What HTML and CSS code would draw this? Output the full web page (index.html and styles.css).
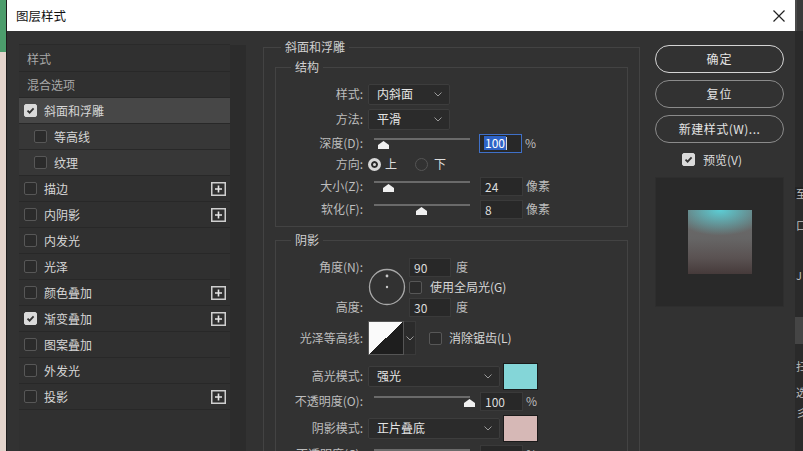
FILE: index.html
```html
<!DOCTYPE html>
<html lang="zh-CN">
<head>
<meta charset="utf-8">
<title>图层样式</title>
<link rel="stylesheet" href="styles.css">
</head>
<body>
<div class="screen">
  <div class="bg-left"><div class="green"></div><div class="pink"></div></div>
  <div class="dialog">
    <div class="titlebar">
      <span class="title">图层样式</span>
      <svg class="close" width="12" height="12" viewBox="0 0 12 12"><path d="M0.5 0.5 L11.5 11.5 M11.5 0.5 L0.5 11.5" stroke="#222" stroke-width="1.2" fill="none"/></svg>
    </div>
    <div class="body">
      <div class="sidebar">
        <ul class="list">
          <li class="item head">样式</li>
          <li class="item head">混合选项</li>
          <li class="item active"><span class="cb on"><svg width="11" height="11" viewBox="0 0 11 11"><path d="M2.5 5.6 L4.6 7.7 L8.6 3.4" stroke="#333" stroke-width="1.8" fill="none"/></svg></span><span class="itxt">斜面和浮雕</span></li>
          <li class="item sub"><span class="cb"></span><span class="itxt">等高线</span></li>
          <li class="item sub"><span class="cb"></span><span class="itxt">纹理</span></li>
          <li class="item"><span class="cb"></span><span class="itxt">描边</span><svg class="plus" width="15" height="14" viewBox="0 0 15 14"><rect x="0.75" y="0.75" width="13.5" height="12.5" fill="none" stroke="#cfcfcf" stroke-width="1.5"/><path d="M7.5 3.5 V10.5 M4 7 H11" stroke="#e6e6e6" stroke-width="1.6"/></svg></li>
          <li class="item"><span class="cb"></span><span class="itxt">内阴影</span><svg class="plus" width="15" height="14" viewBox="0 0 15 14"><rect x="0.75" y="0.75" width="13.5" height="12.5" fill="none" stroke="#cfcfcf" stroke-width="1.5"/><path d="M7.5 3.5 V10.5 M4 7 H11" stroke="#e6e6e6" stroke-width="1.6"/></svg></li>
          <li class="item"><span class="cb"></span><span class="itxt">内发光</span></li>
          <li class="item"><span class="cb"></span><span class="itxt">光泽</span></li>
          <li class="item"><span class="cb"></span><span class="itxt">颜色叠加</span><svg class="plus" width="15" height="14" viewBox="0 0 15 14"><rect x="0.75" y="0.75" width="13.5" height="12.5" fill="none" stroke="#cfcfcf" stroke-width="1.5"/><path d="M7.5 3.5 V10.5 M4 7 H11" stroke="#e6e6e6" stroke-width="1.6"/></svg></li>
          <li class="item"><span class="cb on"><svg width="11" height="11" viewBox="0 0 11 11"><path d="M2.5 5.6 L4.6 7.7 L8.6 3.4" stroke="#333" stroke-width="1.8" fill="none"/></svg></span><span class="itxt">渐变叠加</span><svg class="plus" width="15" height="14" viewBox="0 0 15 14"><rect x="0.75" y="0.75" width="13.5" height="12.5" fill="none" stroke="#cfcfcf" stroke-width="1.5"/><path d="M7.5 3.5 V10.5 M4 7 H11" stroke="#e6e6e6" stroke-width="1.6"/></svg></li>
          <li class="item"><span class="cb"></span><span class="itxt">图案叠加</span></li>
          <li class="item"><span class="cb"></span><span class="itxt">外发光</span></li>
          <li class="item"><span class="cb"></span><span class="itxt">投影</span><svg class="plus" width="15" height="14" viewBox="0 0 15 14"><rect x="0.75" y="0.75" width="13.5" height="12.5" fill="none" stroke="#cfcfcf" stroke-width="1.5"/><path d="M7.5 3.5 V10.5 M4 7 H11" stroke="#e6e6e6" stroke-width="1.6"/></svg></li>
        </ul>
        <div class="scroll"></div>
      </div>

      <div class="main">
        <fieldset class="group outer">
          <legend>斜面和浮雕</legend>
          <fieldset class="group inner struct">
            <legend>结构</legend>
            <div class="frow r1">
              <span class="lbl">样式:</span>
              <div class="select w82"><span>内斜面</span><svg class="chev" width="8" height="5" viewBox="0 0 8 5"><path d="M0.5 0.5 L4 4 L7.5 0.5" stroke="#9a9a9a" fill="none"/></svg></div>
            </div>
            <div class="frow r2">
              <span class="lbl">方法:</span>
              <div class="select w82"><span>平滑</span><svg class="chev" width="8" height="5" viewBox="0 0 8 5"><path d="M0.5 0.5 L4 4 L7.5 0.5" stroke="#9a9a9a" fill="none"/></svg></div>
            </div>
            <div class="frow r3">
              <span class="lbl">深度(D):</span>
              <div class="slider"><div class="track"></div><svg class="thumb" style="left:10px" width="11" height="8" viewBox="0 0 11 8"><path d="M5.5 0 L11 4 V8 H0 V4 Z" fill="#f0f0f0"/></svg></div>
              <div class="field focus"><span class="sel">100</span><span class="caret"></span></div>
              <span class="unit">%</span>
            </div>
            <div class="frow r4">
              <span class="lbl">方向:</span>
              <span class="radio on"></span><span class="rtxt first">上</span>
              <span class="radio"></span><span class="rtxt">下</span>
            </div>
            <div class="frow r5">
              <span class="lbl">大小(Z):</span>
              <div class="slider"><div class="track"></div><svg class="thumb" style="left:15px" width="11" height="8" viewBox="0 0 11 8"><path d="M5.5 0 L11 4 V8 H0 V4 Z" fill="#f0f0f0"/></svg></div>
              <div class="field">24</div>
              <span class="unit">像素</span>
            </div>
            <div class="frow r6">
              <span class="lbl">软化(F):</span>
              <div class="slider"><div class="track"></div><svg class="thumb" style="left:48px" width="11" height="8" viewBox="0 0 11 8"><path d="M5.5 0 L11 4 V8 H0 V4 Z" fill="#f0f0f0"/></svg></div>
              <div class="field">8</div>
              <span class="unit">像素</span>
            </div>
          </fieldset>

          <fieldset class="group inner shadow">
            <legend>阴影</legend>
            <div class="angle">
              <span class="lbl a-lbl1">角度(N):</span>
              <svg class="dial" width="38" height="38" viewBox="0 0 38 38"><circle cx="19" cy="19" r="17.5" fill="none" stroke="#a8a8a8" stroke-width="1.3"/><circle cx="19" cy="8" r="1.4" fill="#c8c8c8"/><circle cx="19" cy="19" r="1.2" fill="#c8c8c8"/></svg>
              <div class="a-in1"><div class="field sm">90</div><span class="unit deg">度</span></div>
              <div class="a-cb"><span class="cb"></span><span class="cbtxt">使用全局光(G)</span></div>
              <span class="lbl a-lbl2">高度:</span>
              <div class="a-in2"><div class="field sm">30</div><span class="unit deg">度</span></div>
            </div>
            <div class="frow contour-row">
              <span class="lbl">光泽等高线:</span>
              <div class="contour"></div>
              <div class="contour-arrow"><svg width="8" height="5" viewBox="0 0 8 5"><path d="M0.5 0.5 L4 4 L7.5 0.5" stroke="#9a9a9a" fill="none"/></svg></div>
              <span class="cb aa"></span><span class="cbtxt">消除锯齿(L)</span>
            </div>
            <div class="frow hl-row">
              <span class="lbl">高光模式:</span>
              <div class="select w132"><span>强光</span><svg class="chev" width="8" height="5" viewBox="0 0 8 5"><path d="M0.5 0.5 L4 4 L7.5 0.5" stroke="#9a9a9a" fill="none"/></svg></div>
              <div class="swatch cyan"></div>
            </div>
            <div class="frow op-row">
              <span class="lbl">不透明度(O):</span>
              <div class="slider"><div class="track"></div><svg class="thumb" style="left:96px" width="11" height="8" viewBox="0 0 11 8"><path d="M5.5 0 L11 4 V8 H0 V4 Z" fill="#f0f0f0"/></svg></div>
              <div class="field">100</div>
              <span class="unit">%</span>
            </div>
            <div class="frow sm-row">
              <span class="lbl">阴影模式:</span>
              <div class="select w132"><span>正片叠底</span><svg class="chev" width="8" height="5" viewBox="0 0 8 5"><path d="M0.5 0.5 L4 4 L7.5 0.5" stroke="#9a9a9a" fill="none"/></svg></div>
              <div class="swatch pinkish"></div>
            </div>
            <div class="frow op-row2">
              <span class="lbl">不透明度(C):</span>
              <div class="slider"><div class="track"></div><svg class="thumb" style="left:44px" width="11" height="8" viewBox="0 0 11 8"><path d="M5.5 0 L11 4 V8 H0 V4 Z" fill="#f0f0f0"/></svg></div>
              <div class="field">50</div>
              <span class="unit">%</span>
            </div>
          </fieldset>
        </fieldset>
      </div>

      <div class="side">
        <div class="btn primary">确定</div>
        <div class="btn second">复位</div>
        <div class="btn third">新建样式(W)...</div>
        <div class="preview-row"><span class="cb on"><svg width="11" height="11" viewBox="0 0 11 11"><path d="M2.5 5.6 L4.6 7.7 L8.6 3.4" stroke="#333" stroke-width="1.8" fill="none"/></svg></span><span class="cbtxt">预览(V)</span></div>
        <div class="preview"><div class="sample"></div></div>
      </div>
    </div>
  </div>
  <div class="bg-right">
    <div class="rs-top"></div>
    <div class="rs-row g1">至</div>
    <div class="rs-row g2">口</div>
    <div class="rs-row g3">J</div>
    <div class="rs-block"></div>
    <div class="rs-row g4">扫</div>
    <div class="rs-row g5">选</div>
    <div class="rs-row g6">彡</div>
  </div>
</div>
</body>
</html>
```
FILE: styles.css
```css
* { box-sizing: border-box; margin: 0; padding: 0; }
html, body { width: 803px; height: 451px; overflow: hidden; }
body {
  font-family: "Noto Sans CJK SC", "Liberation Sans", sans-serif;
  font-size: 12px;
  line-height: 16px;
  background: #2a2a2a;
}
.screen { display: flex; width: 803px; height: 451px; }

.bg-left { width: 6px; flex: none; display: flex; flex-direction: column; }
.green { height: 52px; background: #4c9d6c; }
.pink { flex: 1; background: #e3d4cc; }

.dialog {
  width: 789px; flex: none;
  border-left: 1px solid #1d1d1d;
  display: flex; flex-direction: column;
  background: #323232;
}
.titlebar {
  height: 31px; flex: none; background: #fff;
  display: flex; align-items: center; justify-content: space-between;
  padding: 0 10px 0 9px;
}
.title { color: #111; font-size: 12.5px; }
.close { display: block; margin-top: 1px; }

.body { flex: 1; display: flex; overflow: hidden; padding-left: 12px; }

/* sidebar */
.sidebar { width: 227px; flex: none; display: flex; padding-top: 13px; }
.list {
  list-style: none; width: 211px; background: #303030;
  border-top: 1px solid #2a2a2a; padding-top: 1px;
}
.item {
  height: 26px; border-bottom: 1px solid #282828;
  display: flex; align-items: center;
  padding-left: 5px; color: #d6d6d6;
}
.item .itxt { margin-left: 7px; }
.head { padding-left: 8px; color: #a8a8a8; }
.sub { padding-left: 15px; background: #373737; }
.active { background: #474747; }
.plus { margin-left: auto; margin-right: 4px; display: block; }
.scroll { width: 16px; background: #2c2c2c; margin-top: 1px; }

.cb {
  width: 13px; height: 13px; flex: none;
  border: 1px solid #575757; border-radius: 2px; background: #2b2b2b;
  display: flex; align-items: center; justify-content: center;
}
.cb.on { background: #dadada; border-color: #dadada; }
.cb svg { display: block; }

/* main */
.main { width: 377px; flex: none; margin-left: 17px; padding-top: 8px; }
.group { border: 1px solid #434343; padding: 0 11px; min-width: 0; }
.group > legend {
  font-size: 12px; line-height: 16px; height: 16px;
  padding: 0 4px; color: #d0d0d0;
}
.outer { height: 460px; border-bottom: none; }
.outer > legend { margin-left: 6px; }
.inner > legend { margin-left: 4px; }
.struct { margin-top: 4px; padding-top: 7px; padding-bottom: 6px; }
.shadow { margin-top: 5px; padding-top: 8px; height: 300px; }

.frow { display: flex; align-items: center; }
.lbl { width: 76px; flex: none; text-align: right; margin-right: 5px; color: #bdbdbd; }
.r1 { height: 24px; }
.r2 { height: 26px; }
.r3 { height: 22px; }
.r4 { height: 20px; }
.r5 { height: 24px; }
.r6 { height: 22px; }

.select {
  height: 21px; background: #2b2b2b; border: 1px solid #3d3d3d; border-radius: 2px;
  display: flex; align-items: center; justify-content: space-between;
  padding: 0 7px 0 8px; color: #e4e4e4; flex: none;
}
.select .chev { display: block; }
.w82 { width: 82px; }
.w132 { width: 132px; }

.slider { position: relative; width: 111px; height: 18px; flex: none; }
.track { position: absolute; left: 6px; top: 4px; width: 96px; height: 2px; background: #6a6a6a; }
.thumb { position: absolute; top: 7px; display: block; }

.field {
  width: 43px; height: 19px; flex: none;
  background: #282828; border: 1px solid #3a3a3a;
  color: #dcdcdc; padding-left: 4px; line-height: 17px;
  display: flex; align-items: center;
}
.field.focus { border-color: #3f70c8; }
.field .sel { background: #2e63c6; color: #fff; line-height: 14px; padding: 0 1px; }
.field .caret { width: 1px; height: 13px; background: #dcdcdc; }
.field.sm { width: 42px; }
.r5 .field, .r6 .field, .op-row .field, .op-row2 .field { margin-left: 1px; }
.unit { margin-left: 3px; color: #bdbdbd; }
.unit.deg { margin-left: 5px; }

.radio { width: 13px; height: 13px; border-radius: 50%; border: 1px solid #555; flex: none; }
.r4 .radio:first-of-type { margin-left: 2px; }
.radio.on { background: #1f1f1f; border: 3px solid #d8d8d8; box-shadow: inset 0 0 0 2px #2a2a2a; background-color: #d8d8d8; }
.rtxt { margin-left: 6px; color: #dcdcdc; }
.rtxt.first { margin-left: 4px; margin-right: 18px; }

/* shadow section */
.angle {
  display: grid;
  grid-template-columns: 76px 38px auto;
  grid-template-rows: 22px 18px 22px;
  column-gap: 4px;
  align-items: center;
}
.angle .lbl { margin-right: 0; }
.a-lbl1 { grid-column: 1; grid-row: 1; }
.a-lbl2 { grid-column: 1; grid-row: 3; }
.dial { grid-column: 2; grid-row: 1 / 4; display: block; margin-left: 1px; }
.a-in1 { grid-column: 3; grid-row: 1; display: flex; align-items: center; }
.a-cb { grid-column: 3; grid-row: 2; display: flex; align-items: center; }
.a-in2 { grid-column: 3; grid-row: 3; display: flex; align-items: center; }
.cbtxt { margin-left: 8px; color: #d6d6d6; }

.contour-row { height: 34px; margin-top: 3px; }
.contour {
  width: 36px; height: 34px; flex: none;
  border: 1px solid #555;
  background: linear-gradient(to bottom right, #fafafa 50%, #1e1e1e 50%);
}
.contour-arrow {
  width: 12px; height: 34px; flex: none; background: #2b2b2b;
  border: 1px solid #3a3a3a; border-left: none;
  display: flex; align-items: center; justify-content: center;
}
.contour-arrow svg { display: block; }
.cb.aa { margin-left: 13px; }
.contour-row .cbtxt { margin-left: 7px; }

.hl-row { height: 32px; margin-top: 5px; }
.op-row { height: 18px; }
.sm-row { height: 28px; margin-top: 4px; }
.op-row2 { height: 20px; margin-top: 2px; }
.swatch { width: 35px; height: 27px; margin-left: 3px; border: 1px solid #1a1a1a; flex: none; }
.cyan { background: #84d6d8; }
.pinkish { background: #d6b8b6; }

/* right side */
.side { width: 129px; flex: none; margin-left: 15px; padding-top: 14px; }
.btn {
  height: 28px; border: 1px solid #8b8b8b; border-radius: 14px;
  display: flex; align-items: center; justify-content: center;
  color: #e4e4e4; letter-spacing: 1px;
}
.btn.primary { border-color: #d4d4d4; }
.btn.second { margin-top: 7px; }
.btn.third { margin-top: 7px; letter-spacing: 0.5px; }
.preview-row { display: flex; align-items: center; height: 13px; margin-top: 10px; padding-left: 27px; }
.preview-row .cbtxt { margin-left: 8px; color: #dcdcdc; }
.preview { height: 130px; margin-top: 11px; background: #292929; border: 1px solid #2e2e2e; padding: 32px 0 0 32px; }
.sample {
  width: 64px; height: 64px;
  background:
    radial-gradient(ellipse 75% 40% at 50% 0%, #5ccdd4 0%, rgba(92,205,212,0.55) 45%, rgba(92,205,212,0) 100%),
    linear-gradient(#6c6c6c 0%, #666565 45%, #5a5252 75%, #463a3a 100%);
}

/* background on the right */
.bg-right { width: 8px; flex: none; background: #2a2a2a; overflow: hidden; display: flex; flex-direction: column; }
.rs-top { height: 31px; background: #3a3a3a; border-left: 2px solid #4a4a4a; }
.rs-row { color: #bdbdbd; font-size: 11px; line-height: 12px; height: 12px; padding-left: 1px; white-space: nowrap; }
.g1 { margin-top: 156px; background: #232323; }
.g2 { margin-top: 20px; }
.g3 { margin-top: 38px; }
.rs-block { height: 27px; margin-top: 36px; background: #454545; }
.g4 { margin-top: 16px; }
.g5 { margin-top: 14px; }
.g6 { margin-top: 8px; }
```
